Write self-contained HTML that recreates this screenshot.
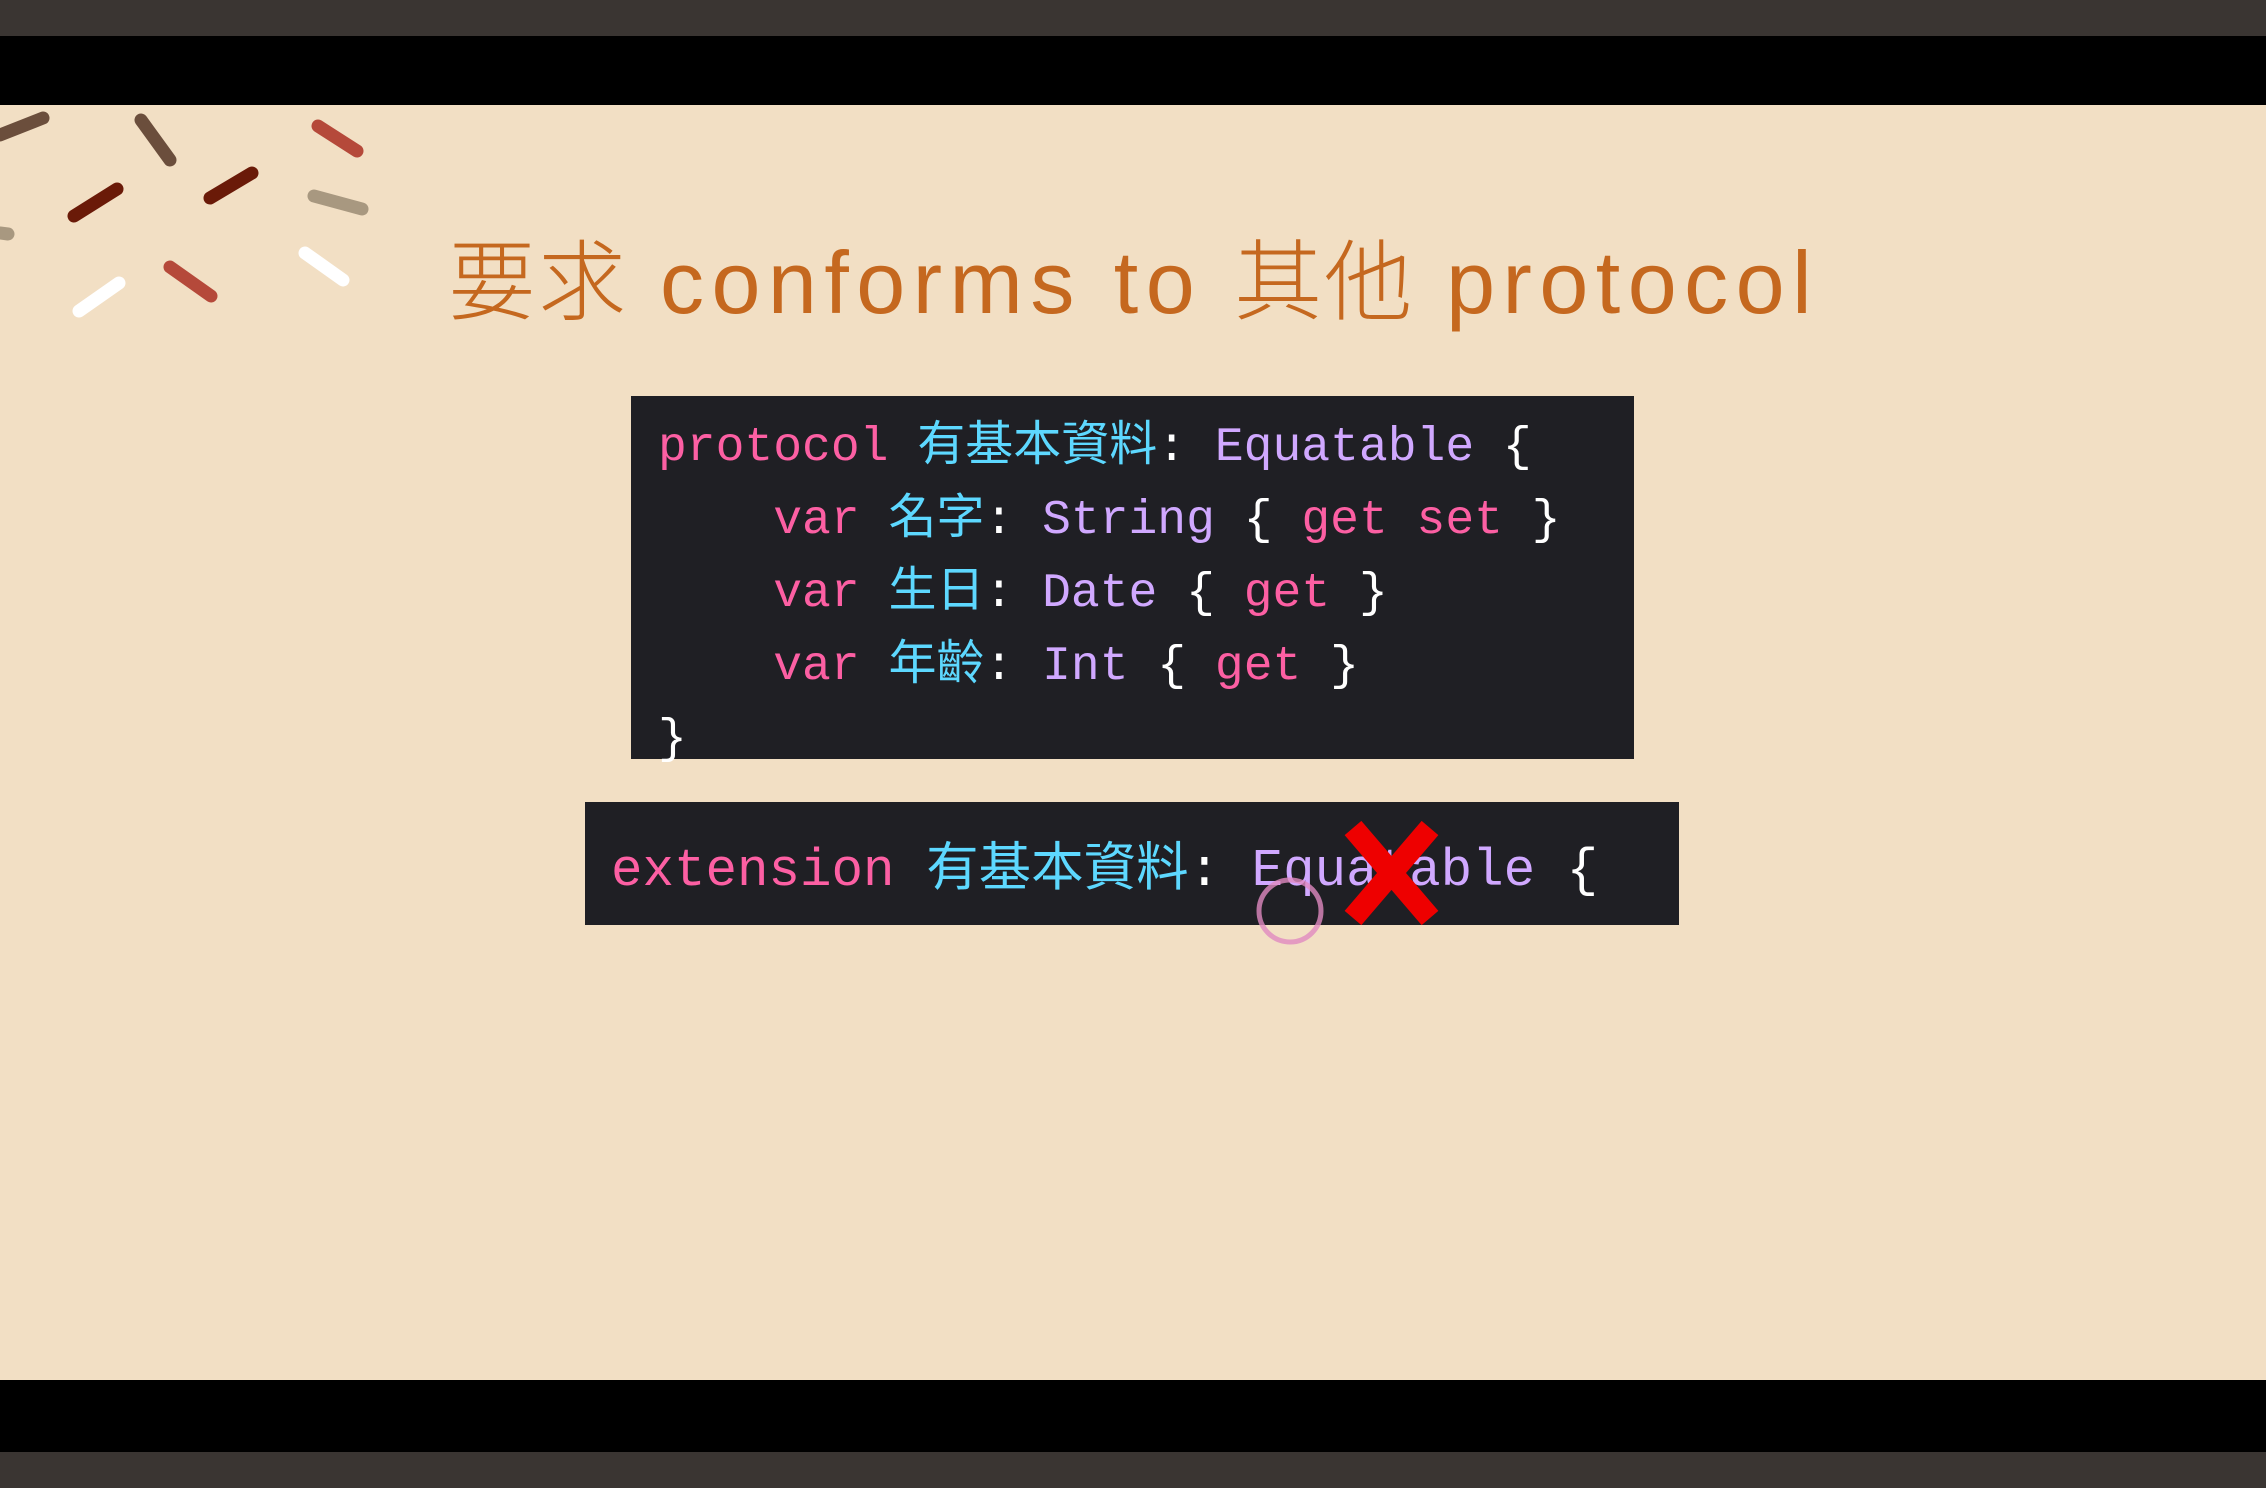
<!DOCTYPE html>
<html><head><meta charset="utf-8"><style>
html,body{margin:0;padding:0;width:2266px;height:1488px;overflow:hidden;background:#f2dfc4;position:relative}
.bar{position:absolute;left:0;width:2266px}
.title{position:absolute;left:448px;top:221px;white-space:nowrap;color:#c5681f;font-family:"Liberation Sans","Noto Sans CJK TC",sans-serif;font-size:88px;line-height:110px;letter-spacing:7.5px}
.title .c{font-family:"Noto Sans CJK TC",sans-serif;font-size:88px;font-weight:300;letter-spacing:2px}
.box{position:absolute;background:#1f1f24}
.code{position:absolute;white-space:pre;font-family:"Liberation Mono","Noto Sans CJK TC",monospace;font-size:48px;color:#ffffff;line-height:60px}
.k{color:#fc5fa3}.n{color:#5dd8ff}.t{color:#d0a8ff}
</style></head><body>
<div class="bar" style="top:0;height:36px;background:#3a3532"></div>
<div class="bar" style="top:36px;height:69px;background:#000"></div>
<div class="bar" style="top:1380px;height:72px;background:#000"></div>
<div class="bar" style="top:1452px;height:36px;background:#3a3532"></div>
<svg style="position:absolute;left:0;top:0" width="400" height="340" stroke-linecap="round" stroke-width="13">
<line x1="0" y1="135" x2="43" y2="118" stroke="#6b4e3c"/>
<line x1="141" y1="120" x2="170" y2="160" stroke="#6b4e3c"/>
<line x1="318" y1="126" x2="357" y2="151" stroke="#b5493a"/>
<line x1="74" y1="216" x2="117" y2="189" stroke="#6a1a08"/>
<line x1="210" y1="198" x2="252" y2="173" stroke="#6a1a08"/>
<line x1="314" y1="196" x2="362" y2="209" stroke="#a89880"/>
<line x1="0" y1="233" x2="8" y2="234" stroke="#a89880"/>
<line x1="305" y1="253" x2="343" y2="280" stroke="#ffffff"/>
<line x1="170" y1="267" x2="211" y2="296" stroke="#b5493a"/>
<line x1="79" y1="311" x2="119" y2="283" stroke="#ffffff"/>
</svg>
<div class="title"><span class="c">要求</span> conforms to <span class="c">其他</span> protocol</div>
<div class="box" style="left:631px;top:396px;width:1003px;height:363px"></div>
<div class="code" style="left:658px;top:412px;line-height:73px"><span class="k">protocol</span> <span class="n">有基本資料</span>: <span class="t">Equatable</span> {
    <span class="k">var</span> <span class="n">名字</span>: <span class="t">String</span> { <span class="k">get set</span> }
    <span class="k">var</span> <span class="n">生日</span>: <span class="t">Date</span> { <span class="k">get</span> }
    <span class="k">var</span> <span class="n">年齡</span>: <span class="t">Int</span> { <span class="k">get</span> }
}</div>
<div class="box" style="left:585px;top:802px;width:1094px;height:123px"></div>
<div class="code" style="left:611px;top:841px;font-size:52.5px"><span class="k">extension</span> <span class="n">有基本資料</span>: <span class="t">Equatable</span> {</div>
<svg style="position:absolute;left:1240px;top:810px" width="220" height="150">
<circle cx="50" cy="101" r="31" fill="none" stroke="#e08ac0" stroke-width="5" opacity="0.8"/>
<line x1="113" y1="18" x2="190" y2="108" stroke="#ee0000" stroke-width="22"/>
<line x1="190" y1="18" x2="113" y2="108" stroke="#ee0000" stroke-width="22"/>
</svg>
</body></html>
